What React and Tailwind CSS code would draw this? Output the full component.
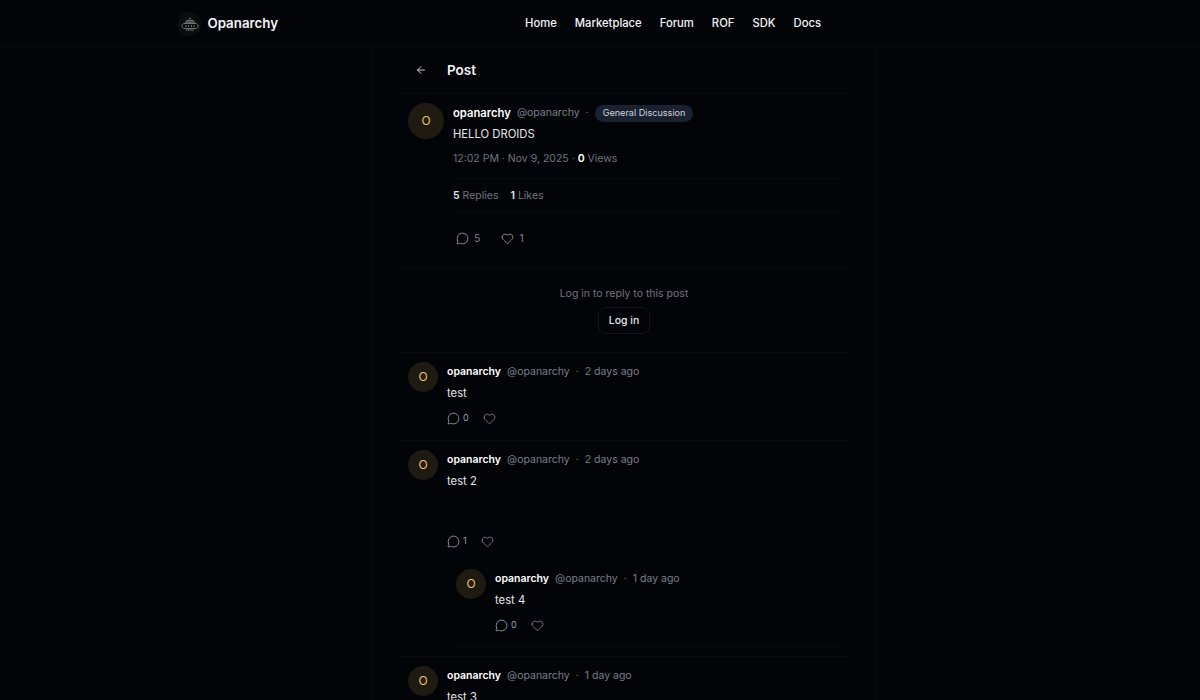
import React from "react";
import { ArrowLeft, MessageCircle, Heart } from "lucide-react";

const Logo = () => (
  <div className="w-6 h-6 rounded-full bg-[#0c0d0f] flex items-center justify-center">
    <svg width="18" height="14" viewBox="0 0 18 14" fill="none" stroke="#6f6f6f" strokeWidth="1">
      <circle cx="9" cy="1.2" r="0.8" fill="#6f6f6f" stroke="none" />
      <path d="M9 1.5v2" />
      <path d="M5.5 3.5h7l1 2.5h-9z" fill="#444" />
      <path d="M2.5 6.5c-2 1-2 4 0 5h13c2-1 2-4 0-5z" />
      <path d="M5 8v2M7.5 8v2M10.5 8v2M13 8v2" />
      <path d="M5 13h8" />
    </svg>
  </div>
);

const Avatar = ({ size }) => (
  <div className={`${size} shrink-0 rounded-full bg-[#1f1b12] flex items-center justify-center text-[#eec15c] text-xs`}>O</div>
);

const Actions = ({ count, width }) => (
  <div className="flex items-center text-[#9ca3af]">
    <span className={`flex items-center gap-[3px] text-[9px] leading-4 ${width}`}>
      <MessageCircle size={13} strokeWidth={1.5} />
      {count}
    </span>
    <Heart size={13} strokeWidth={1.25} />
  </div>
);

const Comment = ({ text, time, count, width = "w-[36px]", extraBody = "", children, className }) => (
  <div className={className}>
    <div className="flex gap-[9px]">
      <Avatar size="w-[30px] h-[30px]" />
      <div className="flex-1">
        <div className="flex items-center text-[10.5px] leading-5">
          <span className="font-semibold text-white">opanarchy</span>
          <span className="ml-[6px] text-[#7b7f88]">@opanarchy</span>
          <span className="mx-[6px] text-[#7b7f88]">·</span>
          <span className="text-[#7b7f88]">{time}</span>
        </div>
        <p className={`text-[11.25px] leading-5 text-[#e5e7eb] mt-[1px] ${extraBody}`}>{text}</p>
        <div className="mt-[7px]">
          <Actions count={count} width={width} />
        </div>
      </div>
    </div>
    {children}
  </div>
);

export default function App() {
  return (
    <div className="min-h-[700px] h-[700px] overflow-hidden bg-[#030408] text-white font-['Inter','Liberation_Sans',sans-serif]">
      <header className="h-[47px] border-b border-[#090a0e] flex items-center pl-[178px] pt-px">
        <div className="flex items-center gap-[6px] w-[100px]">
          <Logo />
          <span className="text-[13.3px] font-semibold text-[#f3f4f6]">Opanarchy</span>
        </div>
        <nav className="flex items-center gap-[18px] text-[11.25px] font-medium text-[#f3f4f6] ml-[247px]">
          <span>Home</span>
          <span>Marketplace</span>
          <span>Forum</span>
          <span>ROF</span>
          <span>SDK</span>
          <span>Docs</span>
        </nav>
      </header>
      <main className="ml-[371px] w-[506px] border-x border-[#090a0e] px-[23px]">
        <div className="h-[47px] border-b border-[#090a0e] flex items-center pl-[20px] gap-[20px]">
          <ArrowLeft size={12} strokeWidth={1.75} className="text-[#e5e7eb]" />
          <h1 className="text-[13.5px] font-semibold text-[#f3f4f6]">Post</h1>
        </div>

        <section className="h-[174px] border-b border-[#090a0e] pl-[13px] pr-3 pt-[9px] flex gap-[9px]">
          <Avatar size="w-9 h-9" />
          <div className="flex-1">
            <div className="flex items-center text-[10.5px] leading-5">
              <span className="font-semibold text-white text-[11.25px]">opanarchy</span>
              <span className="ml-[6px] text-[#7b7f88]">@opanarchy</span>
              <span className="mx-[6px] text-[#7b7f88]">·</span>
              <span className="px-2 h-[17px] rounded-full bg-[#1a2232] text-[9.1px] flex items-center text-[#d1d5db]">General Discussion</span>
            </div>
            <p className="text-[11.25px] leading-5 text-[#e5e7eb] mt-px">HELLO DROIDS</p>
            <p className="text-[10.5px] leading-4 text-[#71757e] mt-[7px]">
              12:02 PM · Nov 9, 2025 · <span className="font-semibold text-white">0</span> Views
            </p>
            <div className="mt-[11px] h-[35px] border-y border-[#090a0e] flex items-center gap-3 text-[10.5px] text-[#71757e]">
              <span><b className="font-semibold text-[#e5e7eb]">5</b> Replies</span>
              <span><b className="font-semibold text-[#e5e7eb]">1</b> Likes</span>
            </div>
            <div className="mt-[18px] pl-[3px] flex items-center gap-[21px] text-[10.5px] text-[#7b7f88]">
              <span className="flex items-center gap-[5px]"><MessageCircle size={13} strokeWidth={1.5} className="text-[#a1a1aa]" />5</span>
              <span className="flex items-center gap-[5px]"><Heart size={13} strokeWidth={1.5} className="text-[#a1a1aa]" />1</span>
            </div>
          </div>
        </section>

        <section className="h-[85px] border-b border-[#090a0e] flex flex-col items-center pt-[18px]">
          <p className="text-[10.5px] leading-4 text-[#71757e]">Log in to reply to this post</p>
          <button className="mt-[5px] h-[27px] px-[10px] rounded-lg border border-[#14161b] text-[10.5px] font-medium text-[#e5e7eb]">Log in</button>
        </section>

        <Comment className="h-[88px] border-b border-[#090a0e] pl-[13px] pt-[9px]" text="test" time="2 days ago" count="0" />
        <Comment className="h-[216px] border-b border-[#090a0e] pl-[13px] pt-[9px]" text="test 2" time="2 days ago" count="1" width="w-[34px]" extraBody="pb-[35px]">
          <div className="ml-[48px] mr-3 mt-[19px] pb-[13px] border-b border-[#090a0e]">
            <div className="pt-px">
              <Comment text="test 4" time="1 day ago" count="0" />
            </div>
          </div>
        </Comment>
        <Comment className="pl-[13px] pt-[9px]" text="test 3" time="1 day ago" count="0" />
      </main>
    </div>
  );
}
